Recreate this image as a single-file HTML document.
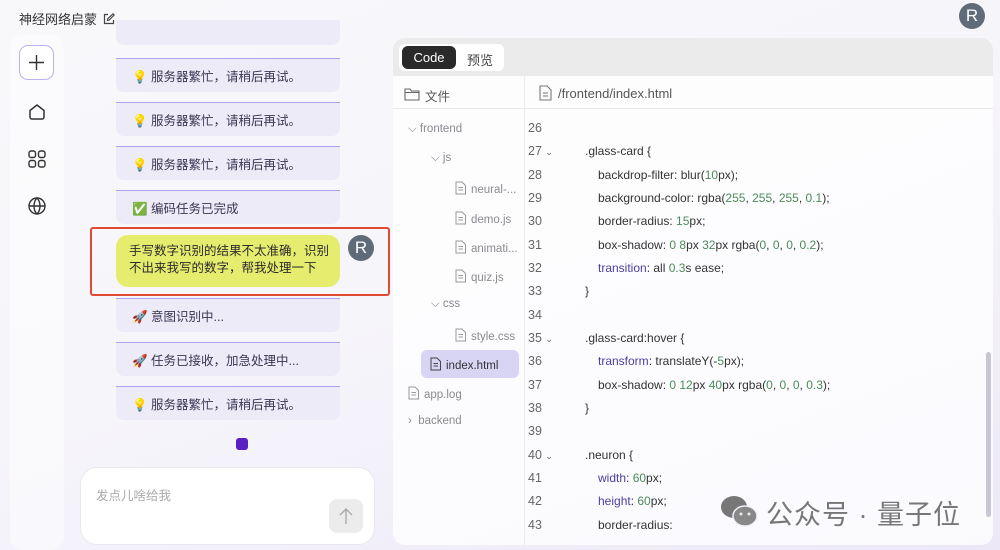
<!DOCTYPE html>
<html><head><meta charset="utf-8"><style>
*{margin:0;padding:0;box-sizing:border-box}
body{width:1000px;height:550px;overflow:hidden;position:relative;font-family:"Liberation Sans","Noto Sans CJK SC",sans-serif;
background:linear-gradient(160deg,#f8f8fb 0%,#f6f5fa 50%,#ece8f8 100%);color:#333}
.a{position:absolute}
.title{left:19px;top:9px;font-size:13px;color:#333}
.side{left:10px;top:35px;width:54px;height:515px;background:rgba(255,255,255,.45);border-radius:12px}
.plus{left:19px;top:45px;width:35px;height:35px;border:1.3px solid #b9b3ee;border-radius:9px;background:#fff}
.bub{left:116px;width:224px;height:34px;background:#eeebf8;border-radius:0 0 8px 8px;border-top:1.5px solid #a9a4ec;font-size:12.5px;color:#3a3550;padding:7px 0 0 16px}
.user{left:116px;top:235px;width:224px;height:52px;background:#e6ec6e;border-radius:12px;font-size:12.5px;color:#2b2b2b;padding:8px 0 0 13px;line-height:17px}
.red{left:90px;top:227px;width:300px;height:69px;border:2px solid #e04a35;border-radius:3px}
.av{width:26px;height:26px;border-radius:50%;background:#5f6b78;color:#fff;font-size:17px;text-align:center;line-height:26px}
.input{left:80px;top:467px;width:295px;height:78px;background:#fff;border:1px solid #e8e8ee;border-radius:17px}
.panel{left:393px;top:38px;width:600px;height:507px;background:rgba(255,255,255,.75);border-radius:12px;overflow:hidden}
.tabbar{left:0;top:0;width:600px;height:38px;background:#ebebeb}
.tree{font-size:11.5px;color:#8a8a90;white-space:nowrap}
.tree svg{vertical-align:-2px;margin-right:4px}
.ln{position:absolute;left:528px;font-size:12.5px;color:#666}
.c1{position:absolute;left:585px;font-size:12px;color:#333;white-space:pre}
.c2{position:absolute;left:598px;font-size:12px;color:#333;white-space:pre}
.p{color:#4b3fa0}.n{color:#4b8a5a}
</style></head><body>
<svg width="0" height="0" style="position:absolute"><defs><g id="f"><path d="M1 1h6l3.5 3.5V13H1z M3.5 6.5h4.5M3.5 9h4.5" fill="none" stroke="currentColor" stroke-width="1"/></g></defs></svg>
<div class="a title">神经网络启蒙 <svg width="12" height="12" viewBox="0 0 12 12" style="vertical-align:-1px;margin-left:2px"><path d="M5 1.5H1.5v9h9V7" fill="none" stroke="#444" stroke-width="1.2"/><path d="M4.5 7.5l.3-1.8L10 .8l1.2 1.2-5 5z" fill="none" stroke="#444" stroke-width="1.1"/></svg></div>
<div class="a av" style="left:959px;top:3px">R</div>
<div class="a side"></div>
<div class="a plus"><svg width="33" height="33" viewBox="0 0 33 33"><path d="M16.5 9v15M9 16.5h15" stroke="#333" stroke-width="1.4"/></svg></div>
<svg class="a" style="left:27px;top:102px" width="20" height="20" viewBox="0 0 20 20"><path d="M3 8.5L10 3l7 5.5V15a2 2 0 0 1-2 2H5a2 2 0 0 1-2-2z" fill="none" stroke="#333" stroke-width="1.5" stroke-linejoin="round"/></svg>
<svg class="a" style="left:27px;top:149px" width="20" height="20" viewBox="0 0 20 20"><g fill="none" stroke="#333" stroke-width="1.4"><rect x="2" y="2" width="6.5" height="6.5" rx="2"/><rect x="11.5" y="2" width="6.5" height="6.5" rx="2"/><rect x="2" y="11.5" width="6.5" height="6.5" rx="2"/><rect x="11.5" y="11.5" width="6.5" height="6.5" rx="2"/></g></svg>
<svg class="a" style="left:27px;top:196px" width="20" height="20" viewBox="0 0 20 20"><g fill="none" stroke="#333" stroke-width="1.4"><circle cx="10" cy="10" r="8"/><path d="M2 10h16M10 2c-4 4-4 12 0 16M10 2c4 4 4 12 0 16"/></g></svg>

<div class="a bub" style="top:20px;height:25px;border-top:none"></div>
<div class="a bub" style="top:58px">💡 服务器繁忙，请稍后再试。</div>
<div class="a bub" style="top:102px">💡 服务器繁忙，请稍后再试。</div>
<div class="a bub" style="top:146px">💡 服务器繁忙，请稍后再试。</div>
<div class="a bub" style="top:190px">✅ 编码任务已完成</div>
<div class="a user">手写数字识别的结果不太准确，识别<br>不出来我写的数字，帮我处理一下</div>
<div class="a red"></div>
<div class="a av" style="left:348px;top:235px">R</div>
<div class="a bub" style="top:298px">🚀 意图识别中...</div>
<div class="a bub" style="top:342px">🚀 任务已接收，加急处理中...</div>
<div class="a bub" style="top:386px">💡 服务器繁忙，请稍后再试。</div>
<div class="a" style="left:236px;top:438px;width:12px;height:12px;background:#5a1fc0;border-radius:3px"></div>
<div class="a input"><div class="a" style="left:15px;top:17px;font-size:12.5px;color:#aaa">发点儿啥给我</div>
<div class="a" style="left:248px;top:31px;width:34px;height:34px;background:#ececec;border-radius:8px"><svg width="34" height="34" viewBox="0 0 34 34"><path d="M17 25V10M11 16l6-6 6 6" fill="none" stroke="#aaa" stroke-width="1.4"/></svg></div></div>

<div class="a panel">
<div class="a tabbar"></div>
<div class="a" style="left:6px;top:6px;width:105px;height:27px;background:#fff;border-radius:6px"></div>
<div class="a" style="left:9px;top:8px;width:54px;height:23px;background:#2a2a2a;border-radius:6px;color:#fff;font-size:13px;text-align:center;line-height:23px">Code</div>
<div class="a" style="left:74px;top:12px;font-size:13px;color:#444">预览</div>
<div class="a" style="left:0;top:70px;width:600px;height:1px;background:#e8e8ec"></div>
<div class="a" style="left:131px;top:38px;width:1px;height:469px;background:#ececf0"></div>
<svg class="a" style="left:11px;top:49px" width="16" height="14" viewBox="0 0 16 14"><path d="M1 2h5l1.5 2H15v9H1z M1 5.5h14" fill="none" stroke="#666" stroke-width="1.1"/></svg>
<div class="a" style="left:32px;top:48px;font-size:12.5px;color:#555">文件</div>
<svg class="a" style="left:146px;top:47px" width="13" height="16" viewBox="0 0 13 16"><path d="M1 1h7l4 4v10H1z M4 8h5M4 11h5" fill="none" stroke="#777" stroke-width="1.1"/></svg>
<div class="a" style="left:165px;top:48px;font-size:13px;color:#555">/frontend/index.html</div>

<div class="a tree" style="left:15px;top:85px">⌵ frontend</div>
<div class="a tree" style="left:38px;top:114px">⌵ js</div>
<div class="a tree" style="left:62px;top:143px"><svg width="12" height="14" style="color:#999"><use href="#f"/></svg>neural-...</div>
<div class="a tree" style="left:62px;top:173px"><svg width="12" height="14" style="color:#999"><use href="#f"/></svg>demo.js</div>
<div class="a tree" style="left:62px;top:202px"><svg width="12" height="14" style="color:#999"><use href="#f"/></svg>animati...</div>
<div class="a tree" style="left:62px;top:231px"><svg width="12" height="14" style="color:#999"><use href="#f"/></svg>quiz.js</div>
<div class="a tree" style="left:38px;top:260px">⌵ css</div>
<div class="a tree" style="left:62px;top:290px"><svg width="12" height="14" style="color:#999"><use href="#f"/></svg>style.css</div>
<div class="a" style="left:28px;top:312px;width:98px;height:28px;background:#d8d4f4;border-radius:6px"></div>
<div class="a tree" style="left:37px;top:319px;color:#333"><svg width="12" height="14" style="color:#444"><use href="#f"/></svg>index.html</div>
<div class="a tree" style="left:15px;top:348px"><svg width="12" height="14" style="color:#999"><use href="#f"/></svg>app.log</div>
<div class="a tree" style="left:15px;top:377px">›&nbsp; backend</div>
</div>

<div class="ln" style="top:121px">26</div>
<div class="ln" style="top:144px">27 <span style="font-size:9px">⌄</span></div><div class="c1" style="top:144px">.glass-card {</div>
<div class="ln" style="top:168px">28</div><div class="c2" style="top:168px">backdrop-filter: blur(<span class="n">10</span>px);</div>
<div class="ln" style="top:191px">29</div><div class="c2" style="top:191px">background-color: rgba(<span class="n">255</span>, <span class="n">255</span>, <span class="n">255</span>, <span class="n">0.1</span>);</div>
<div class="ln" style="top:214px">30</div><div class="c2" style="top:214px">border-radius: <span class="n">15</span>px;</div>
<div class="ln" style="top:238px">31</div><div class="c2" style="top:238px">box-shadow: <span class="n">0 8</span>px <span class="n">32</span>px rgba(<span class="n">0</span>, <span class="n">0</span>, <span class="n">0</span>, <span class="n">0.2</span>);</div>
<div class="ln" style="top:261px">32</div><div class="c2" style="top:261px"><span class="p">transition</span>: all <span class="n">0.3</span>s ease;</div>
<div class="ln" style="top:284px">33</div><div class="c1" style="top:284px">}</div>
<div class="ln" style="top:308px">34</div>
<div class="ln" style="top:331px">35 <span style="font-size:9px">⌄</span></div><div class="c1" style="top:331px">.glass-card:hover {</div>
<div class="ln" style="top:354px">36</div><div class="c2" style="top:354px"><span class="p">transform</span>: translateY(-<span class="n">5</span>px);</div>
<div class="ln" style="top:378px">37</div><div class="c2" style="top:378px">box-shadow: <span class="n">0 12</span>px <span class="n">40</span>px rgba(<span class="n">0</span>, <span class="n">0</span>, <span class="n">0</span>, <span class="n">0.3</span>);</div>
<div class="ln" style="top:401px">38</div><div class="c1" style="top:401px">}</div>
<div class="ln" style="top:424px">39</div>
<div class="ln" style="top:448px">40 <span style="font-size:9px">⌄</span></div><div class="c1" style="top:448px">.neuron {</div>
<div class="ln" style="top:471px">41</div><div class="c2" style="top:471px"><span class="p">width</span>: <span class="n">60</span>px;</div>
<div class="ln" style="top:494px">42</div><div class="c2" style="top:494px"><span class="p">height</span>: <span class="n">60</span>px;</div>
<div class="ln" style="top:518px">43</div><div class="c2" style="top:518px">border-radius:</div>

<div class="a" style="left:986px;top:352px;width:5px;height:165px;background:#c8c6d4;border-radius:3px"></div>
<svg class="a" style="left:719px;top:494px" width="40" height="34" viewBox="0 0 40 34"><ellipse cx="15" cy="13" rx="13" ry="11" fill="#777"/><ellipse cx="26" cy="22" rx="12" ry="10" fill="#888" stroke="#f0eef8" stroke-width="1.5"/><circle cx="22" cy="20" r="1.5" fill="#eee"/><circle cx="30" cy="20" r="1.5" fill="#eee"/></svg>
<div class="a" style="left:766px;top:493px;font-size:27px;color:#777;letter-spacing:1px">公众号 · 量子位</div>
</body></html>
